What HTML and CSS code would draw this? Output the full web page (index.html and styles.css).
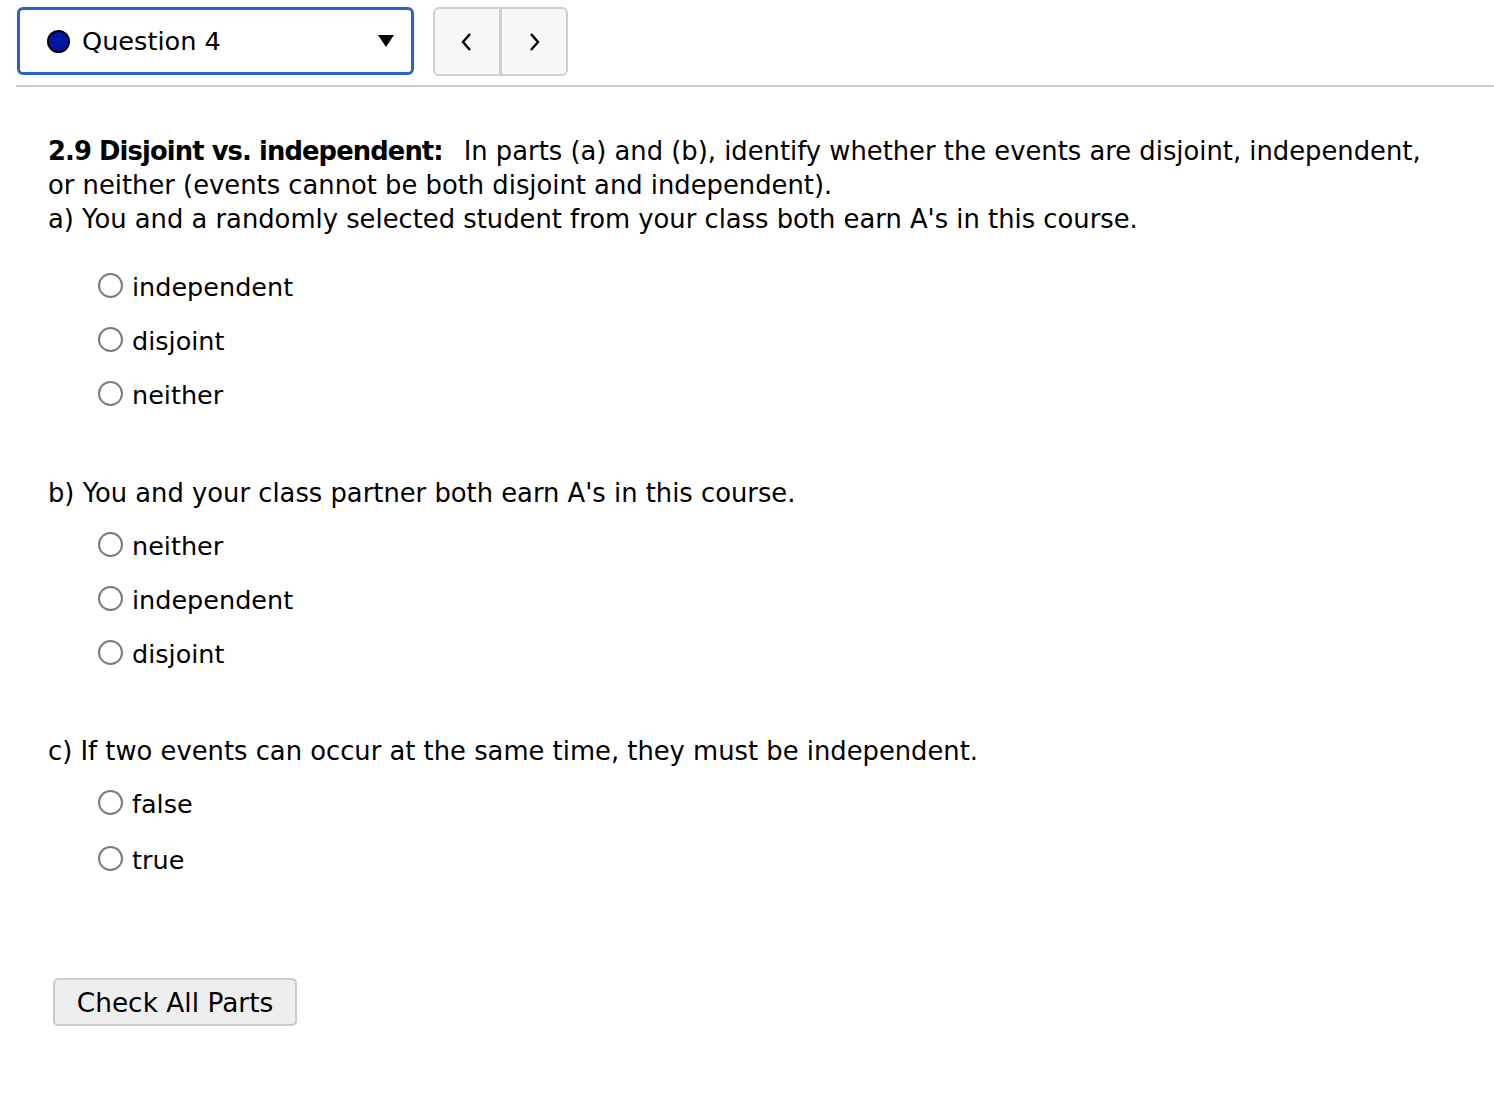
FILE: index.html
```html
<!DOCTYPE html>
<html>
<head>
<meta charset="utf-8">
<link rel="stylesheet" href="styles.css">
</head>
<body>
<div class="topbar">
  <div class="select">
    <span class="dot"></span>
    <span class="select-label">Question 4</span>
    <span class="caret"></span>
  </div>
  <div class="nav">
    <button class="nav-btn" aria-label="Previous">
      <svg width="16" height="22" viewBox="0 0 16 22"><path d="M11 3 L4 11 L11 19" fill="none" stroke="#000" stroke-width="2.4"/></svg>
    </button>
    <button class="nav-btn" aria-label="Next">
      <svg width="16" height="22" viewBox="0 0 16 22"><path d="M5 3 L12 11 L5 19" fill="none" stroke="#000" stroke-width="2.4"/></svg>
    </button>
  </div>
</div>
<div class="rule"></div>

<main class="question">
  <p class="stem"><b class="title">2.9 Disjoint vs. independent:</b><span class="gap"></span>In parts (a) and (b), identify whether the events are disjoint, independent, or neither (events cannot be both disjoint and independent).<br>a) You and a randomly selected student from your class both earn A's in this course.</p>
  <div class="options opts-a">
    <label class="opt"><span class="radio"></span>independent</label>
    <label class="opt"><span class="radio"></span>disjoint</label>
    <label class="opt"><span class="radio"></span>neither</label>
  </div>

  <p class="part part-b">b) You and your class partner both earn A's in this course.</p>
  <div class="options opts-b">
    <label class="opt"><span class="radio"></span>neither</label>
    <label class="opt"><span class="radio"></span>independent</label>
    <label class="opt"><span class="radio"></span>disjoint</label>
  </div>

  <p class="part part-c">c) If two events can occur at the same time, they must be independent.</p>
  <div class="options opts-c">
    <label class="opt"><span class="radio"></span>false</label>
    <label class="opt"><span class="radio"></span>true</label>
  </div>

  <button class="check">Check All Parts</button>
</main>
</body>
</html>
```

FILE: styles.css
```css
* { box-sizing: border-box; }
html, body { margin: 0; padding: 0; background: #fff; }
body {
  font-family: "DejaVu Sans", sans-serif;
  color: #000;
  font-size: 25.8px;
}
.topbar {
  display: flex;
  align-items: flex-start;
  gap: 19px;
  padding: 7px 0 0 17px;
}
.select {
  width: 397px;
  height: 68px;
  border: 3px solid #2a64c8;
  border-radius: 6px;
  display: flex;
  align-items: center;
  padding-left: 27px;
  padding-right: 17px;
}
.dot {
  width: 23px;
  height: 23px;
  border-radius: 50%;
  background: #0016a6;
  border: 2px solid #000;
  flex: none;
}
.select-label {
  margin-left: 12px;
  font-size: 25.6px;
  flex: 1;
}
.caret {
  width: 0; height: 0;
  border-left: 8px solid transparent;
  border-right: 8px solid transparent;
  border-top: 12px solid #000;
}
.nav {
  display: flex;
  width: 135px;
  height: 69px;
  border: 2px solid #cfcfcf;
  border-radius: 6px;
  background: #f7f7f7;
  overflow: hidden;
}
.nav-btn {
  flex: 1;
  border: 0;
  background: transparent;
  display: flex;
  align-items: center;
  justify-content: center;
  padding: 0;
}
.nav-btn + .nav-btn { border-left: 3px solid #cfcfcf; }
.rule {
  margin: 9px 0 0 16px;
  height: 2px;
  background: #cccccc;
}
.question {
  padding-left: 48px;
  padding-top: 47px;
}
.stem, .part {
  margin: 0;
  line-height: 34px;
  padding-right: 60px;
}
.title { font-weight: bold; letter-spacing: -0.9px; }
.gap { display: inline-block; width: 21px; }
.options {
  display: flex;
  flex-direction: column;
  padding-left: 50px;
}
.opts-a { margin-top: 24px; }
.part-b { margin-top: 54px; }
.opts-b { margin-top: 9px; }
.part-c { margin-top: 53px; }
.opts-c { margin-top: 9px; }
.opts-c .opt + .opt { margin-top: 2px; }
.opt {
  display: flex;
  align-items: center;
  height: 54px;
  font-size: 25.5px;
}
.radio {
  width: 25px;
  height: 25px;
  border: 2px solid #7a7a7a;
  border-radius: 50%;
  background: #fff;
  margin-right: 9px;
  margin-top: -4px;
  flex: none;
}
.check {
  display: block;
  margin: 91px 0 0 5px;
  width: 244px;
  height: 48px;
  font-family: inherit;
  font-size: 26.4px;
  color: #000;
  background: #eeeeee;
  border: 2px solid #cccccc;
  border-radius: 5px;
  padding: 0;
}
```
